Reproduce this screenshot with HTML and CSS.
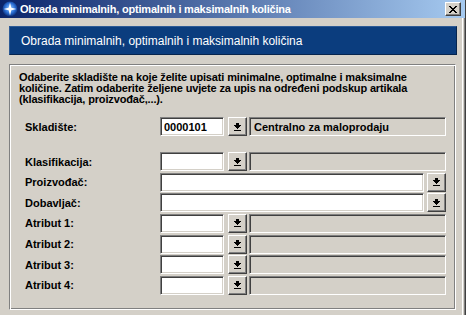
FILE: index.html
```html
<!DOCTYPE html>
<html lang="hr">
<head>
    <meta charset="UTF-8">
    <meta name="viewport" content="width=device-width, initial-scale=1.0">
    <title>Obrada minimalnih, optimalnih i maksimalnih količina</title>
    <link rel="stylesheet" href="styles.css">
</head>
<body>
    <div class="window">
        <div class="titlebar">
            <svg class="app-icon" viewBox="0 0 16 16">
                <defs>
                    <radialGradient id="glow" cx="50%" cy="45%" r="55%">
                        <stop offset="0" stop-color="#9fd0ff"/>
                        <stop offset="0.6" stop-color="#2a6fd6"/>
                        <stop offset="1" stop-color="#0b2f7a"/>
                    </radialGradient>
                </defs>
                <circle cx="8" cy="8" r="7.5" fill="url(#glow)"/>
                <path d="M8 1.5 L9.3 6.7 L14.5 8 L9.3 9.3 L8 14.5 L6.7 9.3 L1.5 8 L6.7 6.7 Z" fill="#fff"/>
            </svg>
            <span class="title">Obrada minimalnih, optimalnih i maksimalnih količina</span>
            <button class="close" title="Zatvori">
                <svg viewBox="0 0 8 7" width="8" height="7" shape-rendering="crispEdges">
                    <path d="M0 0h2v1h-2zM6 0h2v1h-2zM1 1h2v1h-2zM5 1h2v1h-2zM2 2h4v1h-4zM3 3h2v1h-2zM2 4h4v1h-4zM1 5h2v1h-2zM5 5h2v1h-2zM0 6h2v1h-2zM6 6h2v1h-2z" fill="#000"/>
                </svg>
            </button>
        </div>

        <div class="content">
            <div class="banner">Obrada minimalnih, optimalnih i maksimalnih količina</div>

            <div class="group">
                <p class="intro">Odaberite skladište na koje želite upisati minimalne, optimalne i maksimalne<br>količine. Zatim odaberite željene uvjete za upis na određeni podskup artikala<br>(klasifikacija, proizvođač,...).</p>

                <div class="row row-first">
                    <label>Skladište:</label>
                    <input class="code" type="text" value="0000101">
                    <button class="pick"><svg class="arrow"><use href="#arrow"/></svg></button>
                    <div class="info">Centralno za maloprodaju</div>
                </div>

                <div class="rows">
                    <div class="row">
                        <label>Klasifikacija:</label>
                        <input class="code" type="text">
                        <button class="pick"><svg class="arrow"><use href="#arrow"/></svg></button>
                        <div class="info"></div>
                    </div>
                    <div class="row">
                        <label>Proizvođač:</label>
                        <input class="wide" type="text">
                        <button class="pick"><svg class="arrow"><use href="#arrow"/></svg></button>
                    </div>
                    <div class="row">
                        <label>Dobavljač:</label>
                        <input class="wide" type="text">
                        <button class="pick"><svg class="arrow"><use href="#arrow"/></svg></button>
                    </div>
                    <div class="row">
                        <label>Atribut 1:</label>
                        <input class="code" type="text">
                        <button class="pick"><svg class="arrow"><use href="#arrow"/></svg></button>
                        <div class="info"></div>
                    </div>
                    <div class="row">
                        <label>Atribut 2:</label>
                        <input class="code" type="text">
                        <button class="pick"><svg class="arrow"><use href="#arrow"/></svg></button>
                        <div class="info"></div>
                    </div>
                    <div class="row">
                        <label>Atribut 3:</label>
                        <input class="code" type="text">
                        <button class="pick"><svg class="arrow"><use href="#arrow"/></svg></button>
                        <div class="info"></div>
                    </div>
                    <div class="row">
                        <label>Atribut 4:</label>
                        <input class="code" type="text">
                        <button class="pick"><svg class="arrow"><use href="#arrow"/></svg></button>
                        <div class="info"></div>
                    </div>
                </div>
            </div>
        </div>
    </div>

    <!-- shared glyph for the lookup buttons -->
    <svg width="0" height="0" class="defs">
        <symbol id="arrow" viewBox="0 0 7 8">
            <path d="M2 0h3v2h-3zM0 2h7v1h-7zM1 3h5v1h-5zM2 4h3v1h-3zM3 5h1v1h-1zM0 7h7v1h-7z" fill="#000"/>
        </symbol>
    </svg>
</body>
</html>
```

FILE: styles.css
```css
body {
    margin: 0;
    background-color: #d4d0c8;
    font-family: 'Liberation Sans', Arial, sans-serif;
    font-size: 11px;
    color: #000;
}
.window {
    width: 466px;
    height: 315px;
    overflow: hidden;
    box-sizing: border-box;
    border-right: 1px solid #404040;
    box-shadow: inset -1px 0 #808080, inset -2px 0 #d4d0c8, inset -3px 0 #fff;
}
.titlebar {
    height: 18px;
    display: flex;
    align-items: center;
    padding-left: 2px;
    background: linear-gradient(to right, #0a246a, #a6caf0);
    color: #fff;
    font-weight: bold;
    font-size: 11px;
}
.app-icon {
    width: 16px;
    height: 16px;
    margin-right: 2px;
    flex: none;
}
.title {
    white-space: nowrap;
    letter-spacing: -0.2px;
}
.close {
    margin-left: auto;
    margin-right: 4px;
    width: 16px;
    height: 14px;
    padding: 0;
    display: flex;
    align-items: center;
    justify-content: center;
    background: #d4d0c8;
    border: 1px solid;
    border-color: #fff #404040 #404040 #fff;
    box-shadow: inset -1px -1px #808080;
}
.content {
    padding: 8px 0 0 9px;
}
.banner {
    width: 448px;
    height: 29px;
    box-sizing: border-box;
    display: flex;
    align-items: center;
    padding-left: 11px;
    background: #0b3d7e;
    border: 1px solid;
    border-color: #2c5a96 #06244d #06244d #2c5a96;
    color: #fff;
    font-size: 12px;
}
.group {
    margin-top: 9px;
    width: 447px;
    height: 246px;
    box-sizing: border-box;
    padding: 7px 9px 0;
    border: 1px solid;
    border-color: #808080 #fff #fff #808080;
    box-shadow: inset 1px 1px #fff, inset -1px -1px #808080;
}
.intro {
    margin: 0;
    font-weight: bold;
    line-height: 11px;
    white-space: nowrap;
    letter-spacing: -0.15px;
}
.row {
    display: flex;
    align-items: center;
    height: 19px;
    margin-left: 6px;
}
.row-first {
    margin-top: 12px;
}
.rows {
    margin-top: 16px;
    display: flex;
    flex-direction: column;
    gap: 1.67px;
}
label {
    width: 135px;
    flex: none;
    font-weight: bold;
}
input,
.info {
    height: 19px;
    box-sizing: border-box;
    border: 1px solid;
    border-color: #808080 #fff #fff #808080;
    box-shadow: inset 1px 1px #404040, inset -1px -1px #d4d0c8;
    font-family: inherit;
    font-size: 11px;
    font-weight: bold;
    margin: 0;
    padding: 0 3px;
}
input {
    background: #fff;
    outline: none;
}
input.code {
    width: 64px;
}
input.wide {
    width: 264px;
    margin-right: 3px;
}
.info {
    width: 197px;
    margin-left: 2px;
    display: flex;
    align-items: center;
    padding-left: 4px;
    background: #d4d0c8;
}
.code + .pick {
    margin-left: 4px;
}
.pick {
    width: 19px;
    height: 19px;
    padding: 0;
    display: flex;
    align-items: center;
    justify-content: center;
    background: #d4d0c8;
    border: 1px solid;
    border-color: #fff #404040 #404040 #fff;
    box-shadow: inset -1px -1px #808080;
}
.arrow {
    width: 7px;
    height: 8px;
    shape-rendering: crispEdges;
}
.defs {
    position: absolute;
}
```
